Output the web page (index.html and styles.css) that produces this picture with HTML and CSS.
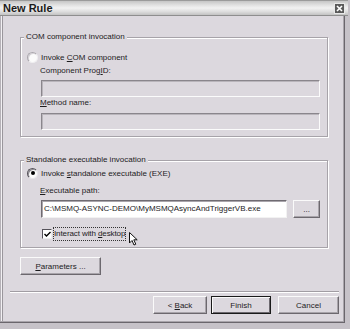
FILE: index.html
```html
<!DOCTYPE html>
<html lang="en">
<head>
    <meta charset="UTF-8">
    <title>New Rule</title>
    <link rel="stylesheet" href="styles.css">
</head>
<body>
    <div class="window">
        <div class="titlebar">
            <span class="title">New Rule</span>
            <svg class="close" width="11" height="11" viewBox="0 0 11 11">
                <rect x="0.5" y="0.5" width="10" height="10" fill="#5a5a5a" stroke="#e8e8e8"/>
                <path d="M3 3 L8 8 M8 3 L3 8" stroke="#ffffff" stroke-width="1.6"/>
            </svg>
        </div>
        <div class="content">
            <fieldset class="group group-com">
                <legend>COM component invocation</legend>
                <div class="option"><span class="radio"></span><span>Invoke <u>C</u>OM component</span></div>
                <div class="field-label">Component Prog<u>I</u>D:</div>
                <div class="textbox disabled"></div>
                <div class="field-label label-method"><u>M</u>ethod name:</div>
                <div class="textbox disabled box-method"></div>
            </fieldset>

            <fieldset class="group group-exe">
                <legend>Standalone executable invocation</legend>
                <div class="option"><span class="radio checked"></span><span>Invoke <u>s</u>tandalone executable (EXE)</span></div>
                <div class="field-label label-path"><u>E</u>xecutable path:</div>
                <div class="path-row">
                    <div class="textbox path">C:\MSMQ-ASYNC-DEMO\MyMSMQAsyncAndTriggerVB.exe</div>
                    <button class="btn btn-browse">...</button>
                </div>
                <div class="check-row">
                    <span class="checkbox">
                        <svg width="7" height="7" viewBox="0 0 7 7">
                            <path d="M0.5 3 L2.5 5 L6.5 1" fill="none" stroke="#000" stroke-width="1.4"/>
                        </svg>
                    </span>
                    <span class="focus-label">Interact with <u>d</u>esktop</span>
                </div>
            </fieldset>

            <button class="btn btn-params"><u>P</u>arameters ...</button>

            <div class="separator"></div>

            <div class="actions">
                <button class="btn btn-back">&lt; <u>B</u>ack</button>
                <button class="btn btn-finish">Finish</button>
                <button class="btn btn-cancel">Cancel</button>
            </div>
        </div>

        <!-- mouse pointer over the checkbox label -->
        <svg class="cursor" width="9" height="14" viewBox="0 0 9 14">
            <path d="M0.5 0.5 L0.5 11 L3 8.5 L5 13 L6.8 12.2 L4.8 7.8 L8.2 7.8 Z" fill="#ffffff" stroke="#111" stroke-width="1"/>
        </svg>
    </div>
</body>
</html>
```

FILE: styles.css
```css
:root {
    --face: #dcd8de;
    --shadow: #8c888f;
    --dark: #5e5a60;
    --light: #ffffff;
    --text: #1c1b1d;
}

* {
    box-sizing: border-box;
}

body {
    margin: 0;
    width: 350px;
    height: 329px;
    background: #c6c2c8;
    font-family: "Liberation Sans", Arial, sans-serif;
    font-size: 8px;
    color: var(--text);
    overflow: hidden;
}

.window {
    position: relative;
    width: 345px;
    height: 323px;
    background: var(--face);
    box-shadow: inset -1px -1px 0 #6a666c, inset -2px -2px 0 #a9a5ab, inset 1px 0 0 #b5b1b7, inset 2px 0 0 #f2f0f3, inset 3px 0 0 #9a969c;
    display: flex;
    flex-direction: column;
}

.titlebar {
    height: 16px;
    width: 348px;
    display: flex;
    align-items: center;
    justify-content: space-between;
    padding: 0 3px 0 3px;
    background: linear-gradient(to bottom, #c6c6c6 0%, #e2e2e2 30%, #f2f2f2 50%, #dedede 75%, #c2c2c2 100%);
    border-top: 1px solid #9b9b9b;
    border-bottom: 1px solid #8e8e8e;
}

.title {
    font-size: 11px;
    font-weight: bold;
    color: #1a1a1a;
}

.close {
    display: block;
    margin-top: 1px;
}

.content {
    padding: 16px 0 0 20px;
    display: flex;
    flex-direction: column;
    align-items: flex-start;
}

.group {
    width: 308px;
    margin: 0;
    border: 1px solid #a7a3a9;
    box-shadow: inset 1px 1px 0 var(--light), 1px 1px 0 var(--light);
    padding: 9px 7px 6px 6px;
    min-inline-size: 0;
}

.group legend {
    line-height: 10px;
    padding: 0 2px;
    margin-left: -3px;
    background: var(--face);
}

.group-exe {
    margin-top: 18px;
    padding-top: 2px;
}

.option {
    height: 12px;
    display: flex;
    align-items: center;
    gap: 3px;
}

.radio {
    width: 11px;
    height: 11px;
    border-radius: 50%;
    background: #fbfbfb;
    border: 1px solid;
    border-color: #a9a6ac #f0eef1 #f0eef1 #a9a6ac;
    box-shadow: inset 1px 1px 0 #d6d3d8;
    position: relative;
}

.radio.checked {
    border-color: #55525a #e8e6ea #e8e6ea #55525a;
    box-shadow: inset 1px 1px 0 #8d8a90;
}

.radio.checked::after {
    content: '';
    position: absolute;
    left: 2.5px;
    top: 2.5px;
    width: 4px;
    height: 4px;
    border-radius: 50%;
    background: #000;
}

.field-label {
    margin: 3px 0 0 13px;
    line-height: 10px;
}

.label-method {
    margin-top: 1px;
}

.label-path {
    margin-top: 7px;
}

.textbox {
    margin: 4px 0 0 14px;
    width: 279px;
    height: 17px;
    border: 1px solid;
    border-color: #8a868c #fbfbfb #fbfbfb #8a868c;
    box-shadow: inset 1px 1px 0 #b9b5bb;
}

.textbox.disabled {
    background: var(--face);
}

.box-method {
    margin-top: 5px;
}

.path-row {
    display: flex;
    align-items: flex-start;
    margin-top: 4px;
}

.textbox.path {
    margin: 0 0 0 14px;
    width: 248px;
    height: 18px;
    background: #ffffff;
    padding: 0 2px;
    line-height: 16px;
    white-space: nowrap;
    overflow: hidden;
    border-color: #6f6b72 #f2f2f2 #f2f2f2 #6f6b72;
    box-shadow: inset 1px 1px 0 #a9a5ab;
}

.btn {
    font-family: inherit;
    font-size: 8px;
    color: var(--text);
    background: var(--face);
    height: 18px;
    padding: 0;
    border: 1px solid;
    border-color: #fafafa #6c686e #6c686e #fafafa;
    box-shadow: inset -1px -1px 0 #a8a4aa;
    text-align: center;
    line-height: 15px;
}

.btn-browse {
    width: 27px;
    margin-left: 6px;
}

.check-row {
    height: 14px;
    margin: 9px 0 0 15px;
    display: flex;
    align-items: center;
    gap: 1px;
}

.checkbox {
    width: 10px;
    height: 10px;
    background: #fff;
    border: 1px solid;
    border-color: #55525a #eeeeee #eeeeee #55525a;
    display: flex;
    align-items: center;
    justify-content: center;
}

.checkbox svg {
    display: block;
}

.focus-label {
    height: 14px;
    line-height: 12px;
    padding: 0;
    border: 1px dotted #333;
    letter-spacing: -0.1px;
}

.btn-params {
    margin-top: 9px;
    width: 81px;
}

.separator {
    margin: 16px 0 0 -10px;
    width: 329px;
    height: 2px;
    border-top: 1px solid #a19da3;
    border-bottom: 1px solid var(--light);
}

.actions {
    display: flex;
    margin: 3px 0 0 133px;
}

.btn-back {
    width: 54px;
}

.btn-finish {
    width: 60px;
    margin-left: 4px;
    border: 1px solid #1a1a1a;
    box-shadow: inset 1px 1px 0 #fafafa, inset -1px -1px 0 #6c686e;
}

.btn-cancel {
    width: 61px;
    margin-left: 7px;
}

.cursor {
    position: absolute;
    left: 129px;
    top: 232px;
}
```
